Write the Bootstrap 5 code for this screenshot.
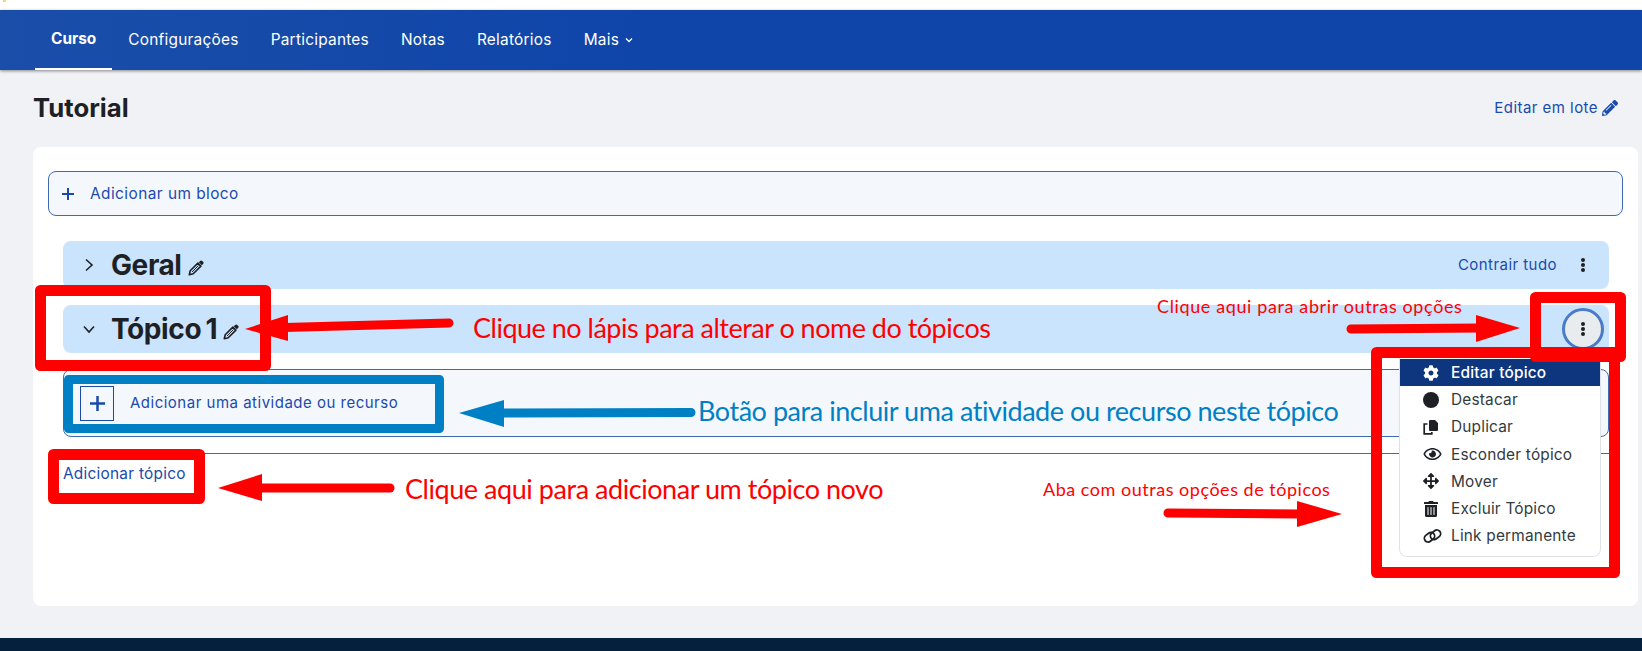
<!DOCTYPE html>
<html lang="pt-BR">
<head>
<meta charset="utf-8">
<title>Tutorial</title>
<link href="https://cdn.jsdelivr.net/npm/bootstrap@5.3.0/dist/css/bootstrap.min.css" rel="stylesheet">
<style>
html,body{height:651px;overflow:hidden}
body{background:#f1f2f6;font-family:Inter,"Noto Sans",sans-serif;font-size:14.5px;color:#1d2125;position:relative}
.top-strip{height:10px;background:#fff;position:relative}
.top-strip::before{content:"";position:absolute;left:3px;top:0;width:3px;height:2px;background:#f7d774}
.course-nav{height:60px;padding-left:35px;background:linear-gradient(90deg,#1a4ea9,#0f45a9 40%);box-shadow:0 1px 3px rgba(0,0,0,.45);position:relative}
.course-nav .nav-link{color:#fff;padding:0 16px;height:60px;display:flex;align-items:center;font-size:15.4px;letter-spacing:.25px}
.course-nav .nav-link.active{font-weight:700;font-size:15.4px;border-bottom:2px solid #fff;letter-spacing:0}
.more-chev{margin-left:6px;width:8px;height:6px}
.page-head{padding:23px 24px 24px 33px}
.page-title{font-size:25.7px;font-weight:700;line-height:30px;margin:0}
.bulk-link{font-size:15px;letter-spacing:.45px;color:#1a4aab;text-decoration:none;gap:4px}
.icon-pen{width:16px;height:16px;fill:currentColor}
.main-panel{height:459px;margin:0 4px 0 33px;padding:24px 15px 0;background:#fff;border-radius:8px}
.add-block{height:45px;display:flex;align-items:center;gap:16px;padding:1px 0 0 13px;border:1px solid #3f69b0;border-radius:8px;background:#f4f8fd;color:#1a4aab;font-size:15.4px;letter-spacing:.45px}
.sect-wrap{margin:25px 14px 0 15px}
.sect-bar{height:48px;background:#cbe4fd;border-radius:8px;display:flex;align-items:center;padding:0 14px 0 20px;position:relative}
.sect-bar+.sect-bar{margin-top:16px}
.sect-chev{width:12px;height:14px;flex:none;margin-right:16px}
.sect-name{font-size:28px;font-weight:700;word-spacing:-2px;letter-spacing:-.4px;color:#1d2125;margin:0;line-height:1}
.sect-pen{width:16px;height:16px;margin:6px 0 0 6px;flex:none}
.collapse-link{font-size:15px;letter-spacing:.45px;color:#1a4aab;text-decoration:none;margin-right:14px}
.kebab{width:24px;height:14px;fill:#1d2125;flex:none}
.kebab-btn{width:42px;height:42px;border-radius:50%;border:3px solid #4a7bc8;background:#e9ecef;display:flex;align-items:center;justify-content:center;padding:0;margin-right:-9px}
.kebab-btn .kebab{width:6px}
.activity-box{height:68px;margin-top:16px;border:1px solid #3f69b0;border-radius:8px;background:#f4f8fd;padding:16px 0 0 16px;display:flex;align-items:flex-start;gap:16px;color:#1a4aab;font-size:15px;letter-spacing:.5px}
.plus-box{width:34px;height:35px;border:1px solid #1a4aab;display:flex;align-items:center;justify-content:center}
.activity-label{line-height:34px}
.add-plus{width:12px;height:12px;stroke:#1a4aab;stroke-width:2;flex:none}
.plus-box .add-plus{width:15px;height:15px}
.sect-rule{margin-top:16px;border-top:1px solid #3f69b0;padding-top:9px}
.add-topic{font-size:15.4px;letter-spacing:.25px;color:#1a4aab;text-decoration:none;line-height:22px}
.sect-menu.dropdown-menu{display:block;top:45px;right:8px;left:auto;width:202px;min-width:0;padding:8px 0 7px;border:1px solid #dee2e6;border-radius:8px;background:#fff;z-index:5}
.sect-menu .dropdown-item{height:27.2px;display:flex;align-items:center;padding:0 0 0 23px;gap:12px;font-size:15.4px;color:#343a40;letter-spacing:.2px}
.sect-menu .dropdown-item.active{background:#0d367f;color:#fff;font-weight:500}
.menu-ic{width:16px;height:16px;flex:none;fill:currentColor}
.menu-ic-wide{width:19px;margin-right:-3px}
.anno-layer{position:absolute;left:0;top:0;width:1642px;height:651px;z-index:10;pointer-events:none}
.anno{position:absolute;font-family:Lato,"Noto Sans",sans-serif;white-space:nowrap;color:#f00;line-height:1}
.anno-a{left:473px;top:314px;font-size:27px;letter-spacing:-.5px}
.anno-b{left:698px;top:397px;font-size:27px;letter-spacing:-.45px;color:#0080c4}
.anno-c{left:405px;top:475px;font-size:27px;letter-spacing:-.45px}
.anno-d{left:1157px;top:297px;font-size:18px;letter-spacing:.62px}
.anno-e{left:1043px;top:480px;font-size:18px;letter-spacing:.52px}
.page-foot{position:absolute;left:0;right:0;top:638px;height:13px;background:#05203c}
</style>
</head>
<body>
<div class="top-strip"></div>
<nav class="course-nav nav">
  <a class="nav-link active" href="#">Curso</a>
  <a class="nav-link" href="#">Configurações</a>
  <a class="nav-link" href="#">Participantes</a>
  <a class="nav-link" href="#">Notas</a>
  <a class="nav-link" href="#">Relatórios</a>
  <a class="nav-link" href="#">Mais<svg class="more-chev" viewBox="0 0 8 6"><path d="M1 1.5l3 3 3-3" fill="none" stroke="#fff" stroke-width="1.3"/></svg></a>
</nav>
<header class="page-head d-flex justify-content-between align-items-center">
  <h1 class="page-title">Tutorial</h1>
  <a class="bulk-link d-flex align-items-center" href="#">Editar em lote
    <svg class="icon-pen" viewBox="0 0 512 512"><path d="M497.9 142.1l-46.1 46.1c-4.7 4.7-12.3 4.7-17 0l-111-111c-4.7-4.7-4.7-12.3 0-17l46.1-46.1c18.7-18.7 49.1-18.7 67.9 0l60.1 60.1c18.8 18.7 18.8 49.1 0 67.9zM284.2 99.8L21.6 362.4.4 483.9c-2.9 16.4 11.4 30.6 27.8 27.8l121.5-21.3 262.6-262.6c4.7-4.7 4.7-12.3 0-17l-111-111c-4.8-4.7-12.4-4.7-17.1 0zM124.1 339.9c-5.5-5.5-5.5-14.3 0-19.8l154-154c5.5-5.5 14.3-5.5 19.8 0s5.5 14.3 0 19.8l-154 154c-5.5 5.5-14.3 5.5-19.8 0zM88 424h48v36.3l-64.5 11.3-31.1-31.1L51.7 376H88v48z"/></svg>
  </a>
</header>
<main class="main-panel">
  <div class="add-block">
    <svg class="add-plus" viewBox="0 0 12 12"><path d="M6 0v12M0 6h12"/></svg>
    <span>Adicionar um bloco</span>
  </div>
  <div class="sect-wrap">
    <div class="sect-bar">
      <svg class="sect-chev" viewBox="0 0 12 14"><path d="M3 1.5l6 5.5-6 5.5" fill="none" stroke="#1d2125" stroke-width="1.6"/></svg>
      <h3 class="sect-name">Geral</h3>
      <svg class="sect-pen" viewBox="0 0 16 16"><path d="M1.3 14.7l.9-3.9L9.9 3.1l3 3-7.7 7.7z" fill="none" stroke="#1d2125" stroke-width="1.6" stroke-linejoin="round"/><path d="M4 12l6.6-6.6" stroke="#1d2125"/><path d="M10.8 2.2l1.3-1.3a1.5 1.5 0 0 1 2.1 0l.9.9a1.5 1.5 0 0 1 0 2.1l-1.3 1.3z" fill="#1d2125"/></svg>
      <a class="collapse-link ms-auto" href="#">Contrair tudo</a>
      <svg class="kebab" viewBox="0 0 24 14"><circle cx="12" cy="2" r="2"/><circle cx="12" cy="7" r="2"/><circle cx="12" cy="12" r="2"/></svg>
    </div>
    <div class="sect-bar">
      <svg class="sect-chev" viewBox="0 0 12 14"><path d="M1 4.5l5 5.5 5-5.5" fill="none" stroke="#1d2125" stroke-width="1.6"/></svg>
      <h3 class="sect-name">Tópico 1</h3>
      <svg class="sect-pen" viewBox="0 0 16 16"><path d="M1.3 14.7l.9-3.9L9.9 3.1l3 3-7.7 7.7z" fill="none" stroke="#1d2125" stroke-width="1.6" stroke-linejoin="round"/><path d="M4 12l6.6-6.6" stroke="#1d2125"/><path d="M10.8 2.2l1.3-1.3a1.5 1.5 0 0 1 2.1 0l.9.9a1.5 1.5 0 0 1 0 2.1l-1.3 1.3z" fill="#1d2125"/></svg>
      <button class="kebab-btn ms-auto" type="button" aria-label="Opções"><svg class="kebab" viewBox="0 0 6 14"><circle cx="3" cy="2" r="2"/><circle cx="3" cy="7" r="2"/><circle cx="3" cy="12" r="2"/></svg></button>
      <div class="dropdown-menu sect-menu">
        <a class="dropdown-item active" href="#"><svg class="menu-ic" viewBox="0 0 512 512"><path d="M487.4 315.7l-42.6-24.6c4.3-23.2 4.3-47 0-70.2l42.6-24.6c4.9-2.8 7.1-8.6 5.5-14-11.1-35.6-30-67.8-54.7-94.6-3.8-4.1-10-5.1-14.8-2.3L380.8 110c-17.9-15.4-38.5-27.3-60.8-35.1V25.8c0-5.6-3.9-10.5-9.4-11.7-36.7-8.2-74.3-7.8-109.2 0-5.5 1.2-9.4 6.1-9.4 11.7V75c-22.2 7.9-42.8 19.8-60.8 35.1L88.7 85.5c-4.9-2.8-11-1.9-14.8 2.3-24.7 26.7-43.6 58.9-54.7 94.6-1.7 5.4.6 11.2 5.5 14L67.3 221c-4.3 23.2-4.3 47 0 70.2l-42.6 24.6c-4.9 2.8-7.1 8.6-5.5 14 11.1 35.6 30 67.8 54.7 94.6 3.8 4.1 10 5.1 14.8 2.3l42.6-24.6c17.9 15.4 38.5 27.3 60.8 35.1v49.2c0 5.6 3.9 10.5 9.4 11.7 36.7 8.2 74.3 7.8 109.2 0 5.5-1.2 9.4-6.1 9.4-11.7v-49.2c22.2-7.9 42.8-19.8 60.8-35.1l42.6 24.6c4.9 2.8 11 1.9 14.8-2.3 24.7-26.7 43.6-58.9 54.7-94.6 1.5-5.5-.7-11.3-5.6-14.1zM256 336c-44.1 0-80-35.9-80-80s35.9-80 80-80 80 35.9 80 80-35.9 80-80 80z"/></svg>Editar tópico</a>
        <a class="dropdown-item" href="#"><svg class="menu-ic" viewBox="0 0 16 16"><circle cx="8" cy="8" r="8" fill="#1d2125"/></svg>Destacar</a>
        <a class="dropdown-item" href="#"><svg class="menu-ic" viewBox="0 0 16 16"><path fill="#1d2125" d="M6 2a1 1 0 0 1 1-1h5l3 3v7a1 1 0 0 1-1 1H7a1 1 0 0 1-1-1z"/><path fill="none" stroke="#1d2125" stroke-width="1.7" d="M4.5 5H1.2v9.8h7.6V13"/></svg>Duplicar</a>
        <a class="dropdown-item" href="#"><svg class="menu-ic menu-ic-wide" viewBox="0 0 576 512"><path fill="#1d2125" d="M288 144a110.94 110.94 0 0 0-31.24 5 55.4 55.4 0 0 1 7.24 27 56 56 0 0 1-56 56 55.4 55.4 0 0 1-27-7.24A111.71 111.71 0 1 0 288 144zm284.52 97.4C518.29 135.59 410.93 64 288 64S57.68 135.64 3.48 241.41a32.35 32.35 0 0 0 0 29.19C57.71 376.41 165.07 448 288 448s230.32-71.64 284.52-177.41a32.35 32.35 0 0 0 0-29.19zM288 400c-98.65 0-189.09-55-237.93-144C98.91 167 189.34 112 288 112s189.09 55 237.93 144C477.1 345 386.66 400 288 400z"/></svg>Esconder tópico</a>
        <a class="dropdown-item" href="#"><svg class="menu-ic" viewBox="0 0 512 512"><path fill="#1d2125" d="M352.201 425.775l-79.196 79.196c-9.373 9.373-24.568 9.373-33.941 0l-79.196-79.196c-15.119-15.119-4.411-40.971 16.971-40.97h51.162L228 284H127.196v51.162c0 21.382-25.851 32.09-40.971 16.971L7.029 272.937c-9.373-9.373-9.373-24.569 0-33.941L86.225 159.8c15.119-15.119 40.971-4.411 40.971 16.971V228H228V127.196h-51.23c-21.382 0-32.09-25.851-16.971-40.971l79.196-79.196c9.373-9.373 24.568-9.373 33.941 0l79.196 79.196c15.119 15.119 4.411 40.971-16.971 40.971h-51.162V228h100.804v-51.162c0-21.382 25.851-32.09 40.97-16.971l79.196 79.196c9.373 9.373 9.373 24.569 0 33.941L425.773 352.2c-15.119 15.119-40.971 4.411-40.97-16.971V284H284v100.804h51.23c21.382 0 32.09 25.851 16.971 40.971z"/></svg>Mover</a>
        <a class="dropdown-item" href="#"><svg class="menu-ic" viewBox="0 0 448 512"><path fill="#1d2125" d="M32 464a48 48 0 0 0 48 48h288a48 48 0 0 0 48-48V128H32zm272-256a16 16 0 0 1 32 0v224a16 16 0 0 1-32 0zm-96 0a16 16 0 0 1 32 0v224a16 16 0 0 1-32 0zm-96 0a16 16 0 0 1 32 0v224a16 16 0 0 1-32 0zM432 32H312l-9.4-18.7A24 24 0 0 0 281.1 0H166.8a23.72 23.72 0 0 0-21.4 13.3L136 32H16A16 16 0 0 0 0 48v32a16 16 0 0 0 16 16h416a16 16 0 0 0 16-16V48a16 16 0 0 0-16-16z"/></svg>Excluir Tópico</a>
        <a class="dropdown-item" href="#"><svg class="menu-ic menu-ic-wide" viewBox="0 0 19 15"><g fill="none" stroke="#1d2125" stroke-width="1.8"><rect x="1" y="5" width="11" height="7.4" rx="3.7" transform="rotate(-38 6.5 8.7)"/><rect x="7" y="2.6" width="11" height="7.4" rx="3.7" transform="rotate(-38 12.5 6.3)"/></g></svg>Link permanente</a>
      </div>
    </div>
    <div class="activity-box">
      <div class="plus-box"><svg class="add-plus" viewBox="0 0 12 12"><path d="M6 0v12M0 6h12"/></svg></div>
      <span class="activity-label">Adicionar uma atividade ou recurso</span>
    </div>
    <div class="sect-rule"><a class="add-topic" href="#">Adicionar tópico</a></div>
  </div>
</main>
<footer class="page-foot"></footer>
<div class="anno-layer">
  <svg width="1642" height="651" viewBox="0 0 1642 651">
    <g fill="none" stroke="#f00" stroke-width="11" stroke-linejoin="round">
      <rect x="40.5" y="290.5" width="225" height="75"/>
      <rect x="53.5" y="454.5" width="146" height="44"/>
      <rect x="1535.5" y="297.5" width="85" height="59"/>
      <rect x="1376.5" y="352.5" width="238" height="220"/>
    </g>
    <rect x="68.5" y="379.5" width="371" height="49" fill="none" stroke="#0080c4" stroke-width="9" stroke-linejoin="round"/>
    <g stroke="#f00" stroke-width="9" stroke-linecap="round">
      <line x1="285" y1="327.5" x2="449" y2="323"/>
      <line x1="260" y1="488" x2="390" y2="488"/>
      <line x1="1351" y1="329" x2="1480" y2="328"/>
      <line x1="1168" y1="513" x2="1300" y2="514"/>
    </g>
    <line x1="500" y1="413" x2="691" y2="412.5" stroke="#0080c4" stroke-width="9" stroke-linecap="round"/>
    <g fill="#f00">
      <polygon points="245,329 288,315 288,341"/>
      <polygon points="218,488 262,474 262,501"/>
      <polygon points="1520,328 1476,315 1476,342"/>
      <polygon points="1342,514 1297,501 1297,527"/>
    </g>
    <polygon points="459,413 504,400 504,427" fill="#0080c4"/>
  </svg>
  <span class="anno anno-a">Clique no lápis para alterar o nome do tópicos</span>
  <span class="anno anno-b">Botão para incluir uma atividade ou recurso neste tópico</span>
  <span class="anno anno-c">Clique aqui para adicionar um tópico novo</span>
  <span class="anno anno-d">Clique aqui para abrir outras opções</span>
  <span class="anno anno-e">Aba com outras opções de tópicos</span>
</div>
<script src="https://cdn.jsdelivr.net/npm/bootstrap@5.3.0/dist/js/bootstrap.bundle.min.js"></script>
</body>
</html>
